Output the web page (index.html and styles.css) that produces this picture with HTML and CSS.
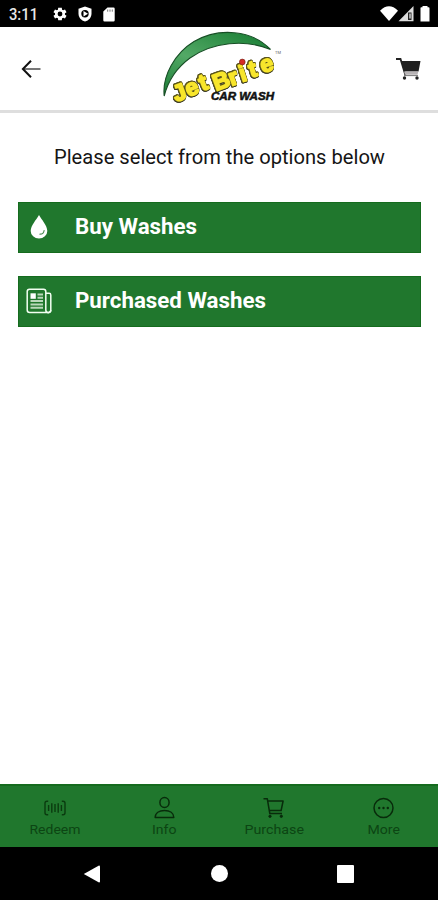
FILE: index.html
```html
<!DOCTYPE html>
<html lang="en">
<head>
<meta charset="utf-8">
<meta name="viewport" content="width=device-width, initial-scale=1">
<title>JetBrite Car Wash</title>
<link rel="stylesheet" href="styles.css">
</head>
<body>
<div class="screen">
  <div class="status">
    <svg class="clock" width="34" height="22" viewBox="0 0 34 22"><text class="clock-text" x="1" y="17" textLength="29" lengthAdjust="spacingAndGlyphs">3:11</text></svg>
    <svg class="gear" width="16" height="16" viewBox="0 0 24 24" fill="#fff"><path d="M19.4 13a7.500 7.500 0 0 0 0-2l2.400-1.700-2.300-4-2.700 1.200a7.500 7.500 0 0 0-1.700-1L14.700 2.500H9.300l-.4 3a7.500 7.500 0 0 0-1.700 1L4.500 5.300l-2.300 4L4.600 11a7.500 7.500 0 0 0 0 2l-2.400 1.700 2.300 4 2.700-1.200a7.500 7.500 0 0 0 1.700 1l.4 3h5.400l.4-3a7.500 7.500 0 0 0 1.700-1l2.700 1.200 2.300-4zM12 15.600a3.600 3.600 0 1 1 0-7.200 3.600 3.600 0 0 1 0 7.200z" fill-rule="evenodd"/></svg>
    <svg class="shield" width="16" height="16" viewBox="0 0 16 16"><path d="M8 .5l6.500 2.300v4.700c0 4-2.700 7-6.500 8-3.800-1-6.500-4-6.500-8V2.800z" fill="#fff"/><circle cx="8" cy="7.700" r="3.700" fill="#000"/><path d="M6.500 5l4.500 2.700-4.500 2.700z" fill="#fff"/></svg>
    <svg class="sd" width="12" height="15" viewBox="0 0 12 15"><path d="M4.500.5H10.500a1.200 1.200 0 0 1 1.200 1.200v11.600a1.200 1.200 0 0 1-1.200 1.200H1.500A1.200 1.200 0 0 1 .3 13.300V4.500z" fill="#fff"/><path d="M4.700 2.500v2.200M7 2.500v2.200M9.300 2.500v2.200" stroke="#777" stroke-width="1"/></svg>
    <svg class="signals" width="52" height="18" viewBox="380 5 52 18"><path d="M380 10.700Q389 2 398 10.700L389 21z" fill="#fff"/><path d="M398.500 21.300L413.500 6v15.300z" fill="#ddd"/><path d="M408 12.500h3.500V20H408z" fill="#222"/><path d="M409.300 13.500h1.400v5h-1.400z" fill="#ddd"/><path d="M420.500 8q0-.8.800-.8h1.200V6h5v1.200h1.200q.8 0 .8.800v13.500h-9z" fill="#fff"/></svg>
  </div>

  <header class="header">
    <svg class="back" width="22" height="20" viewBox="0 0 22 20" fill="none"><path d="M2 10h17.500" stroke="#777" stroke-width="2"/><path d="M10 1.800L1.900 10l8.100 8.200" stroke="#111" stroke-width="2"/></svg>
    <svg class="logo" width="140" height="83" viewBox="150 27 140 83" role="img" aria-label="JetBrite Car Wash">
      <defs>
        <linearGradient id="arc" x1="0" y1="1" x2=".75" y2="0"><stop offset="0" stop-color="#197b34"/><stop offset=".5" stop-color="#53a966"/><stop offset="1" stop-color="#21843b"/></linearGradient>
      </defs>
      <path d="M164.200 96C162 76 175 53 194 41.500C219 27 252 30 270.500 49.500C245 39 213 42 190 58C175 69 168 81 164.200 96z" fill="url(#arc)" stroke="#174e25" stroke-width="1.100"/>
      <text class="brand" x="176 188.500 202.500 216 231.500 242 251 262.500" y="102 97 91 91 86 82 77.500 73" rotate="-20 -22 -22 -20 -20 -18 -16 -16">JetBrite</text>
      <circle cx="242.300" cy="62" r="2.900" fill="#d52b25" stroke="#6c2015" stroke-width=".6"/>
      <text class="carwash" x="211" y="100" textLength="63" lengthAdjust="spacingAndGlyphs">CAR WASH</text>
      <text class="tm" x="275" y="54">TM</text>
    </svg>
    <svg class="cart" width="26" height="24" viewBox="395 57 26 24"><path d="M396 59h4.500l5 16.500" fill="none" stroke="#222" stroke-width="1.800"/><path d="M401 61h19.500l-2 10.500h-14.500z" fill="#202020"/><path d="M404 71.500h14.300l-.8 3.300h-12.500z" fill="#b8b4b6"/><path d="M404 75.600h14" stroke="#777" stroke-width="1"/><circle cx="404.500" cy="78" r="1.700" fill="#222"/><circle cx="417" cy="78" r="1.700" fill="#222"/></svg>
  </header>

  <main class="content">
    <svg class="prompt" width="334" height="28" viewBox="0 0 334 28"><text x="1" y="20" textLength="331" lengthAdjust="spacingAndGlyphs">Please select from the options below</text></svg>
    <div class="option">
      <svg class="option-icon" width="28" height="28" viewBox="0 0 28 28"><path d="M14 2C11.500 6.500 5.700 12.500 5.700 18a8.300 7.600 0 0 0 16.600 0C22.300 12.500 16.500 6.500 14 2z" fill="#fff"/><path d="M15 21.200c2.400 0 3.800-1.500 4.100-3.700" fill="none" stroke="#4a8d51" stroke-width="1.200" stroke-linecap="round"/></svg>
      <svg class="option-label" width="200" height="30" viewBox="0 0 200 30"><text x="0" y="22" textLength="122" lengthAdjust="spacingAndGlyphs">Buy Washes</text></svg>
    </div>
    <div class="option">
      <svg class="option-icon" width="28" height="28" viewBox="0 0 28 28" fill="none" stroke="#f2fff2" stroke-width="1.500"><path d="M22.500 25.500H4.700a2.500 2.500 0 0 1-2.500-2.500V4.600a2.300 2.300 0 0 1 2.300-2.300h14a2.300 2.300 0 0 1 2.300 2.300V23a2.500 2.500 0 0 0 5 0V8a1.700 1.700 0 0 0-1.700-1.700h-3.300"/><path d="M22.500 25.500a2.500 2.500 0 0 0 3.300-2.500"/><path d="M5.500 6.300h5.300v5.500H5.500z" fill="#fff" stroke="none"/><path d="M12.500 7.500h5.500M12.500 10.800h5.500M5.500 14.100h12.500M5.500 17.400h12.500M5.500 20.700h12.500" stroke="#b9d8bb" stroke-width="2"/></svg>
      <svg class="option-label" width="200" height="30" viewBox="0 0 200 30"><text x="0" y="22" textLength="191" lengthAdjust="spacingAndGlyphs">Purchased Washes</text></svg>
    </div>
  </main>

  <nav class="tabs">
    <div class="tab">
      <svg width="24" height="24" viewBox="0 0 24 24" fill="none" stroke="#0a3b0f" stroke-width="1.400"><path d="M5.200 5.200H4a2 2 0 0 0-2 2v9.600a2 2 0 0 0 2 2h1.200M18.800 5.200H20a2 2 0 0 1 2 2v9.600a2 2 0 0 1-2 2h-1.200M5.600 9v6M8.800 7.200v9.600M12 8v8M15.200 7.200v9.600M18.400 9v6"/></svg>
      <svg class="tab-label" width="54" height="16" viewBox="0 0 54 16"><text x="1.500" y="12" textLength="51" lengthAdjust="spacingAndGlyphs">Redeem</text></svg>
    </div>
    <div class="tab">
      <svg width="24" height="24" viewBox="0 0 24 24" fill="none" stroke="#082b0b" stroke-width="1.500"><ellipse cx="12.500" cy="6.500" rx="4.600" ry="5"/><path d="M3.200 21.500c0-4.500 4-7 9.300-7s9.300 2.500 9.300 7z" stroke-linejoin="round"/></svg>
      <svg class="tab-label" width="52" height="16" viewBox="0 0 52 16"><text x="14" y="12" textLength="24.500" lengthAdjust="spacingAndGlyphs">Info</text></svg>
    </div>
    <div class="tab">
      <svg width="24" height="24" viewBox="0 0 24 24" fill="none" stroke="#082b0b" stroke-width="1.500"><path d="M1.500 2.800h3.800l2.500 14.700h12.200M5.700 5h15.400l-2 9.500H7.200" stroke-linejoin="round"/><circle cx="8" cy="20.300" r="1.200" fill="#082b0b" stroke-width=".8"/><circle cx="19.300" cy="20.300" r="1.200" fill="#082b0b" stroke-width=".8"/></svg>
      <svg class="tab-label" width="62" height="16" viewBox="0 0 62 16"><text x="1.500" y="12" textLength="59.500" lengthAdjust="spacingAndGlyphs">Purchase</text></svg>
    </div>
    <div class="tab">
      <svg width="24" height="24" viewBox="0 0 24 24" fill="none" stroke="#082b0b" stroke-width="1.500"><circle cx="12.500" cy="12" r="9.500"/><g fill="#082b0b" stroke="none"><circle cx="8.200" cy="12" r="1.200"/><circle cx="12.500" cy="12" r="1.200"/><circle cx="16.800" cy="12" r="1.200"/></g></svg>
      <svg class="tab-label" width="52" height="16" viewBox="0 0 52 16"><text x="10.500" y="12" textLength="32.500" lengthAdjust="spacingAndGlyphs">More</text></svg>
    </div>
  </nav>

  <div class="sysnav">
    <svg width="18" height="20" viewBox="0 0 18 20"><path d="M.8 10L16 1.500q1 0 1 1v15q0 1-1 1z" fill="#fff"/></svg>
    <span class="home"></span>
    <span class="recent"></span>
  </div>
</div>
</body>
</html>
```
FILE: styles.css
```css
* {
  box-sizing: border-box;
}

body {
  margin: 0;
  background: #fff;
  font-family: Roboto, "Liberation Sans", sans-serif;
}

svg {
  display: block;
  flex: none;
}

.screen {
  width: 438px;
  height: 900px;
  display: flex;
  flex-direction: column;
  background: #fff;
  overflow: hidden;
}

.status {
  height: 27px;
  flex: none;
  display: flex;
  align-items: center;
  padding: 1px 6px 0 8px;
  background: #000;
}

.clock-text {
  font-size: 16px;
  font-weight: 500;
  fill: #e8e8e8;
}

.gear {
  margin-left: 10px;
}

.shield {
  margin-left: 9px;
}

.sd {
  margin-left: 10px;
}

.signals {
  margin-left: auto;
}

.header {
  height: 86px;
  flex: none;
  display: flex;
  align-items: flex-start;
  border-bottom: 3px solid #dedede;
}

.back {
  margin: 32px 0 0 21px;
}

.logo {
  margin-left: 107px;
}

.cart {
  margin: 30px 0 0 105px;
}

.brand {
  font-family: "Liberation Sans", sans-serif;
  font-size: 23px;
  font-weight: 700;
  fill: #f8e62c;
  stroke: #f8e62c;
  stroke-width: 1.8px;
  stroke-linejoin: round;
  filter: drop-shadow(0.5px 0 0 #5c561c) drop-shadow(-0.5px 0 0 #5c561c) drop-shadow(0 -0.5px 0 #5c561c) drop-shadow(0.6px 1.3px 0.3px #3a3924);
}

.carwash {
  font-family: "Liberation Sans", sans-serif;
  font-size: 10px;
  font-weight: 700;
  font-style: italic;
  fill: #111;
  stroke: #111;
  stroke-width: 0.5px;
}

.tm {
  font-size: 4px;
  fill: #666;
}

.content {
  flex: 1;
  display: flex;
  flex-direction: column;
  padding: 31px 17px 0 18px;
}

.prompt {
  margin: 0 0 30px 35px;
  font-size: 20px;
  fill: #151515;
}

.option {
  height: 51px;
  flex: none;
  display: flex;
  align-items: center;
  margin-bottom: 22.5px;
  padding: 0 0 1px 6px;
  background: #20772d;
  border: 1px solid #156b1e;
}

.option-label {
  margin-left: 22px;
  font-size: 22px;
  font-weight: 700;
  fill: #fff;
}

.tabs {
  height: 63px;
  flex: none;
  display: grid;
  grid-template-columns: repeat(4, 1fr);
  background: #20772d;
  border-top: 2px solid #156b1e;
}

.tab {
  display: flex;
  flex-direction: column;
  align-items: center;
  padding-top: 10px;
}

.tab-label {
  margin-top: 2px;
  font-size: 13px;
  fill: #0c4513;
}

.sysnav {
  height: 53px;
  flex: none;
  display: flex;
  align-items: center;
  padding-left: 83px;
  background: #000;
}

.home {
  width: 17px;
  height: 17px;
  margin-left: 110px;
  border-radius: 50%;
  background: #fff;
}

.recent {
  width: 17px;
  height: 18px;
  margin-left: 109px;
  border-radius: 1px;
  background: #fff;
}
```
